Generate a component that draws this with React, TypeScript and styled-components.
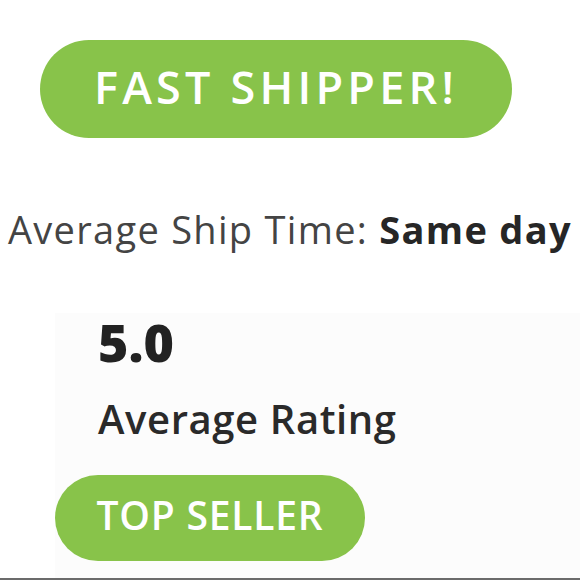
import React from 'react';
import styled, { createGlobalStyle } from 'styled-components';

const GlobalStyle = createGlobalStyle`
  html, body {
    margin: 0;
    padding: 0;
    background: #ffffff;
    font-family: "Open Sans", Lato, sans-serif;
  }
`

const Page = styled.div`
  width: 580px;
  height: 580px;
  box-sizing: border-box;
  border-bottom: 2px solid #6b6b6b;
  display: flex;
  flex-direction: column;
  overflow: hidden;
`
const Pill = styled.div<{ $width: number; $height: number; $size: number; $spacing: number }>`
  width: ${p => p.$width}px;
  height: ${p => p.$height}px;
  box-sizing: border-box;
  padding-bottom: 6px;
  border-radius: ${p => p.$height / 2}px;
  background: #88c34a;
  color: #ffffff;
  display: flex;
  align-items: center;
  justify-content: center;
  font-size: ${p => p.$size}px;
  font-weight: 600;
  letter-spacing: ${p => p.$spacing}px;
`
const PillRow = styled.div<{ $top: number; $left: number }>`
  margin: ${p => p.$top}px 0 0 ${p => p.$left}px;
`
const ShipLine = styled.p`
  margin: 69px 0 0 8px;
  font-size: 38px;
  line-height: 1.2;
  letter-spacing: 1.3px;
  color: #444444;
  white-space: nowrap;
`
const Strong = styled.span`
  color: #262626;
  font-weight: 700;
`
const RatingBlock = styled.div`
  margin: 60px 0 0 55px;
  background: #fcfcfc;
  flex: 1;
  display: flex;
  flex-direction: column;
`
const Score = styled.div`
  margin: 0 0 0 43px;
  font-size: 52px;
  line-height: 1.1;
  font-weight: 800;
  color: #222222;
`
const Label = styled.div`
  margin: 23px 0 0 43px;
  font-size: 40px;
  line-height: 1.3;
  font-weight: 600;
  letter-spacing: 0.6px;
  color: #2a2a2a;
`

function App() {
  return (
    <>
      <GlobalStyle />
      <Page>
        <PillRow $top={40} $left={40}>
          <Pill $width={472} $height={98} $size={45} $spacing={4.2}>FAST SHIPPER!</Pill>
        </PillRow>
        <ShipLine>
          Average Ship Time: <Strong>Same day</Strong>
        </ShipLine>
        <RatingBlock>
          <Score>5.0</Score>
          <Label>Average Rating</Label>
          <PillRow $top={30} $left={0}>
            <Pill $width={310} $height={86} $size={39} $spacing={0.8}>TOP SELLER</Pill>
          </PillRow>
        </RatingBlock>
      </Page>
    </>
  );
}

export default App;
